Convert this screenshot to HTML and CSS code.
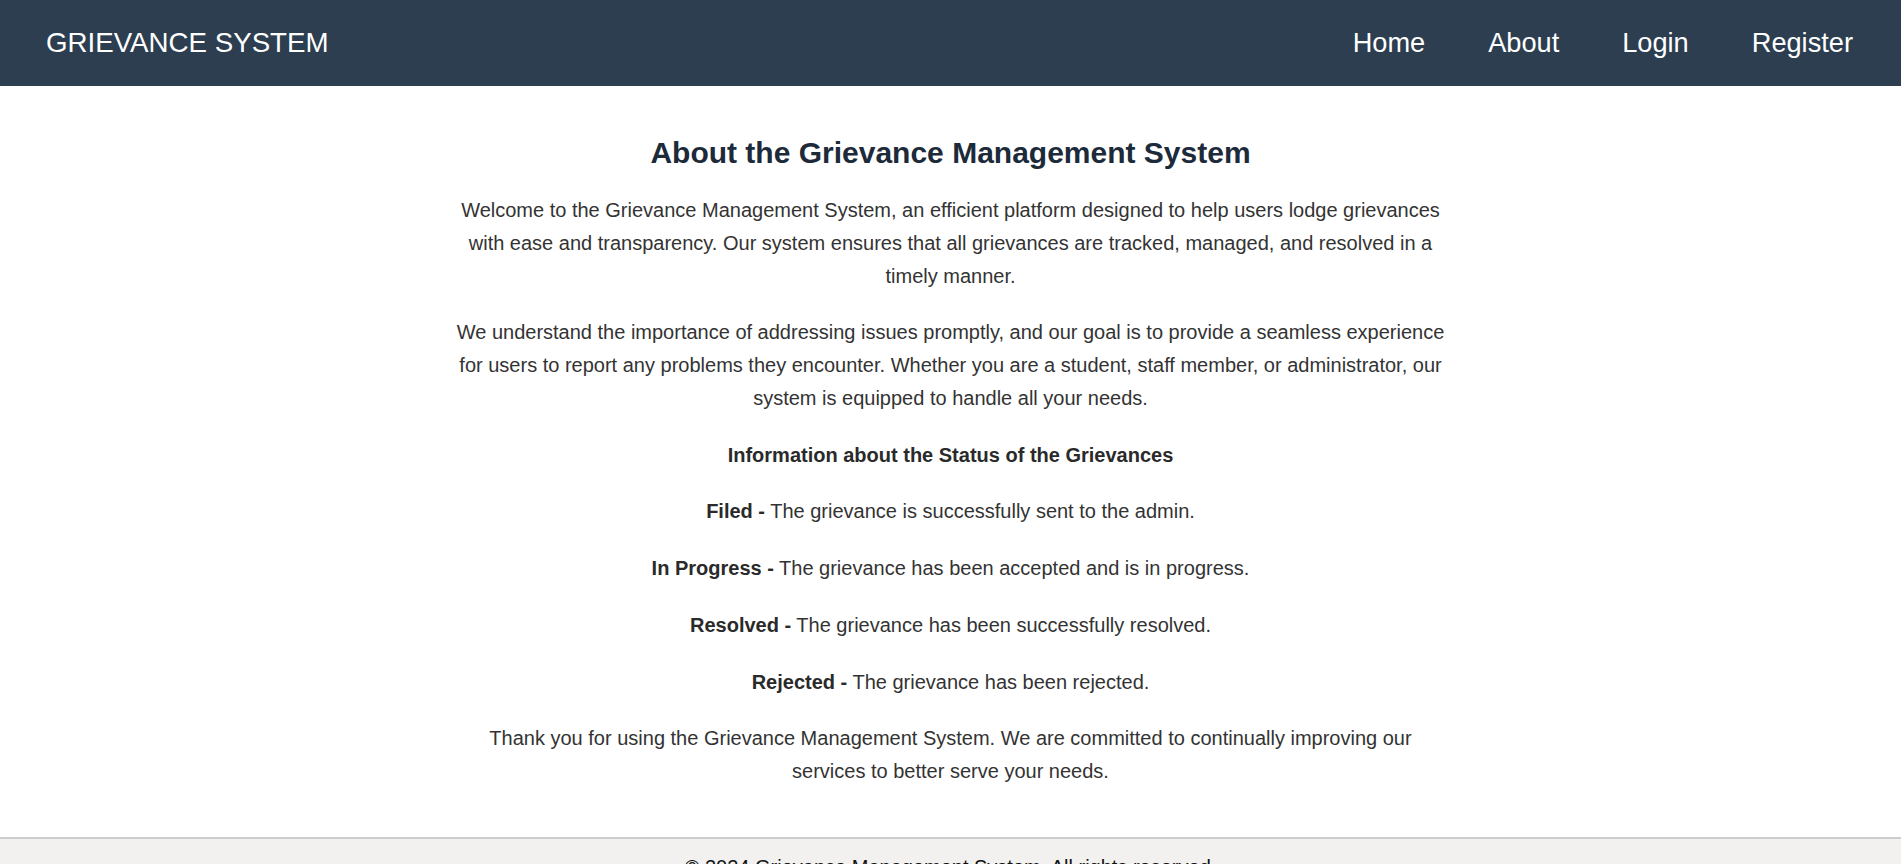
FILE: index.html
```html
<!DOCTYPE html>
<html lang="en">
<head>
<meta charset="utf-8">
<title>About - Grievance System</title>
<link rel="stylesheet" href="styles.css">
</head>
<body>
<header class="site-header">
  <div class="logo">GRIEVANCE SYSTEM</div>
  <nav class="nav">
    <a href="#" class="nav-link">Home</a>
    <a href="#" class="nav-link">About</a>
    <a href="#" class="nav-link">Login</a>
    <a href="#" class="nav-link">Register</a>
  </nav>
</header>
<main class="about">
  <h2 class="about-title">About the Grievance Management System</h2>
  <p>Welcome to the Grievance Management System, an efficient platform designed to help users lodge grievances with ease and transparency. Our system ensures that all grievances are tracked, managed, and resolved in a timely manner.</p>
  <p>We understand the importance of addressing issues promptly, and our goal is to provide a seamless experience for users to report any problems they encounter. Whether you are a student, staff member, or administrator, our system is equipped to handle all your needs.</p>
  <p><strong>Information about the Status of the Grievances</strong></p>
  <p><strong>Filed -</strong> The grievance is successfully sent to the admin.</p>
  <p><strong>In Progress -</strong> The grievance has been accepted and is in progress.</p>
  <p><strong>Resolved -</strong> The grievance has been successfully resolved.</p>
  <p><strong>Rejected -</strong> The grievance has been rejected.</p>
  <p>Thank you for using the Grievance Management System. We are committed to continually improving our services to better serve your needs.</p>
</main>
<footer class="site-footer">
  <p>&copy; 2024 Grievance Management System. All rights reserved.</p>
</footer>
</body>
</html>
```
FILE: styles.css
```css
html {
  overflow-y: scroll;
  background: #ededed;
}
html::-webkit-scrollbar {
  width: 3px;
  background: #ececec;
}
html::-webkit-scrollbar-thumb {
  background: #ececec;
}
body {
  margin: 0;
  background: #ffffff;
  font-family: "Liberation Sans", Arial, sans-serif;
  font-size: 20px;
  color: #333333;
}
.site-header {
  display: flex;
  justify-content: space-between;
  align-items: center;
  height: 86px;
  padding: 0 48px 0 46px;
  background: #2c3e50;
}
.logo {
  font-size: 27.7px;
  color: #ffffff;
}
.nav {
  display: flex;
  gap: 63px;
}
.nav-link {
  font-size: 27.2px;
  color: #ffffff;
  text-decoration: none;
}
.about {
  max-width: 1000px;
  margin: 0 auto;
  padding: 25px;
  text-align: center;
}
.about-title {
  font-size: 30px;
  font-weight: bold;
  color: #1c2a3a;
  margin: 25px 0 23px;
}
.about p {
  line-height: 32.75px;
  margin: 24px 0;
}
.about strong {
  color: #2a2a2a;
}
.site-footer {
  background: #f2f1f0;
  border-top: 2px solid #cccccc;
  padding: 17px 0;
  text-align: center;
  color: #111111;
}
.site-footer p {
  margin: 0;
}
```
